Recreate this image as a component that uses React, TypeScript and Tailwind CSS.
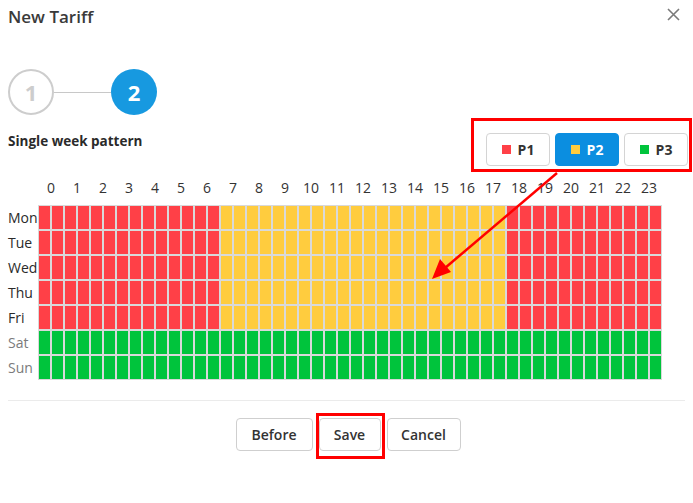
import React from "react";

const DAYS = [
  { name: "Mon", weekend: false },
  { name: "Tue", weekend: false },
  { name: "Wed", weekend: false },
  { name: "Thu", weekend: false },
  { name: "Fri", weekend: false },
  { name: "Sat", weekend: true },
  { name: "Sun", weekend: true },
];

const HOURS = Array.from({ length: 24 }, (_, i) => i);
const SLOTS = Array.from({ length: 48 }, (_, i) => i);

function slotColor(weekend: boolean, slot: number) {
  if (weekend) return "bg-[#00c43c]";
  const h = Math.floor(slot / 2);
  return h >= 7 && h <= 17 ? "bg-[#ffcc3e]" : "bg-[#ff4047]";
}

function PeriodButton({ label, swatch, active }: { label: string; swatch: string; active?: boolean }) {
  return (
    <button
      className={
        active
          ? "flex h-[33px] w-[64px] items-center justify-center gap-[7px] rounded-[4px] border border-[#0b8ee0] bg-[#0b8ee0] text-[14px] font-bold text-white"
          : "flex h-[33px] w-[64px] items-center justify-center gap-[7px] rounded-[4px] border border-[#d4d4d4] bg-white text-[14px] font-bold text-[#333]"
      }
    >
      <span className={`h-[9px] w-[9px] ${swatch}`} />
      {label}
    </button>
  );
}

function FooterButton({ children, w }: { children: React.ReactNode; w: string }) {
  return (
    <button className={`h-[33px] ${w} rounded-[4px] border border-[#cfcfcf] bg-white text-[14px] font-semibold text-[#333]`}>
      {children}
    </button>
  );
}

export default function App() {
  return (
    <div
      className="relative h-[503px] w-[693px] overflow-hidden bg-white text-[#333]"
      style={{ fontFamily: '"Open Sans", "Noto Sans", sans-serif' }}
    >
      {/* Header */}
      <div className="flex items-start justify-between px-2 pt-[5px]">
        <h1 className="text-[17px] font-semibold leading-[24px] text-[#3a3a3a]">New Tariff</h1>
        <svg width="13" height="13" viewBox="0 0 13 13" className="mr-[5px] mt-[3px]">
          <path d="M1 1 L12 12 M12 1 L1 12" stroke="#7a7a7a" strokeWidth="1.6" />
        </svg>
      </div>

      {/* Stepper */}
      <div className="mt-[40px] flex items-center px-2">
        <div className="flex h-[46px] w-[46px] items-center justify-center rounded-full border-2 border-[#cdcdcd] text-[22px] font-bold text-[#cdcdcd]">
          1
        </div>
        <div className="h-px w-[57px] bg-[#c8c8c8]" />
        <div className="flex h-[46px] w-[46px] items-center justify-center rounded-full bg-[#1799e0] text-[22px] font-bold text-white">
          2
        </div>
      </div>

      {/* Pattern title + periods */}
      <div className="mt-[18px] flex items-start justify-between pl-2 pr-[5px]">
        <div className="text-[13.5px] font-bold leading-[16px] text-[#2a2a2a]">Single week pattern</div>
        <div className="flex gap-[5px]">
          <PeriodButton label="P1" swatch="bg-[#ff4047]" />
          <PeriodButton label="P2" swatch="bg-[#ffcc3e]" active />
          <PeriodButton label="P3" swatch="bg-[#00c43c]" />
        </div>
      </div>

      {/* Hour labels */}
      <div className="mt-[12px] flex pl-[38px]">
        {HOURS.map((h) => (
          <div key={h} className="w-[26px] text-center text-[14px] leading-[20px] text-[#333]">
            {h}
          </div>
        ))}
      </div>

      {/* Grid */}
      <div className="mt-[7px] flex flex-col px-2">
        {DAYS.map((d) => (
          <div key={d.name} className="flex h-[25px] items-center">
            <div
              className={`w-[30px] text-[14px] leading-[25px] ${d.weekend ? "text-[#7b7b7b]" : "text-[#2a2a2a]"}`}
            >
              {d.name}
            </div>
            <div className="flex">
              {SLOTS.map((s) => (
                <div
                  key={s}
                  className={`h-[25px] w-[13px] border border-[#d9d9d9] ${slotColor(d.weekend, s)}`}
                />
              ))}
            </div>
          </div>
        ))}
      </div>

      {/* Separator */}
      <div className="mx-2 mt-[20px] h-px bg-[#ebebeb]" />

      {/* Footer */}
      <div className="mt-[17px] flex justify-center gap-[6px] pl-[3px]">
        <FooterButton w="w-[77px]">Before</FooterButton>
        <FooterButton w="w-[62px]">Save</FooterButton>
        <FooterButton w="w-[74px]">Cancel</FooterButton>
      </div>

      {/* Annotations */}
      <div className="pointer-events-none absolute left-[471px] top-[118px] h-[54px] w-[221px] border-[3px] border-[#f00]" />
      <div className="pointer-events-none absolute left-[316px] top-[413px] h-[46px] w-[69px] border-[3px] border-[#f00]" />
      <svg className="pointer-events-none absolute left-0 top-0" width="693" height="503">
        <line x1="557" y1="173" x2="445" y2="268" stroke="#f00" strokeWidth="2.5" />
        <polygon points="432,279 440,259 451,272" fill="#f00" />
      </svg>
    </div>
  );
}
